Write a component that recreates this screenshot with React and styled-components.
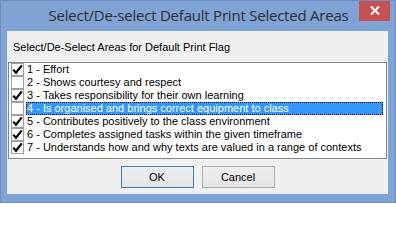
import React, { useState } from "react";
import styled, { createGlobalStyle } from "styled-components";

const GlobalStyle = createGlobalStyle`
  html, body {
    margin: 0;
    padding: 0;
    background: #fff;
  }
  * {
    box-sizing: border-box;
  }
`;

const Window = styled.div`
  width: 396px;
  height: 203px;
  overflow: hidden;
  background: #7ea3d4;
  border: 1px solid #6c8fbf;
  display: flex;
  flex-direction: column;
  padding: 0 7px 8px 6px;
  font-family: "Liberation Sans", Arial, sans-serif;
`;

const TitleBar = styled.div`
  height: 30px;
  flex-shrink: 0;
  display: flex;
  align-items: flex-start;
  position: relative;
`;

const Title = styled.div`
  flex: 1;
  text-align: center;
  font-family: "Open Sans", "Liberation Sans", sans-serif;
  font-size: 15px;
  color: #2e2e2e;
  padding: 4px 0 0 2px;
  letter-spacing: -0.22px;
`;

const CloseButton = styled.button`
  position: absolute;
  top: -1px;
  right: -2px;
  width: 31px;
  height: 21px;
  border: 0;
  background: #c75050;
  display: flex;
  align-items: center;
  justify-content: center;
  padding: 0;
`;

const Client = styled.div`
  flex: 1;
  background: #f0f0f0;
  display: flex;
  flex-direction: column;
  padding: 0 1px;
`;

const Caption = styled.div`
  font-size: 11px;
  color: #000;
  padding: 10px 0 0 5px;
  height: 31px;
  flex-shrink: 0;
`;

const ListBox = styled.div`
  height: 97px;
  flex-shrink: 0;
  background: #fff;
  border: 1px solid #828790;
  padding: 0 0 0 2px;
`;

const Row = styled.div`
  height: 13px;
  display: flex;
  align-items: center;
  font-size: 11px;
  color: #000;
  white-space: nowrap;
`;

const Box = styled.span`
  width: 13px;
  height: 13px;
  border: 1px solid #a0a0a0;
  background: #fff;
  display: flex;
  align-items: center;
  justify-content: center;
  flex-shrink: 0;
  margin-right: 2px;
`;

const Label = styled.span`
  height: 13px;
  line-height: 12px;
  padding: 0 1px;
  flex: ${(p) => (p.selected ? 1 : "none")};
  margin-right: ${(p) => (p.selected ? "3px" : 0)};
  background: ${(p) => (p.selected ? "#3399ff" : "transparent")};
  color: ${(p) => (p.selected ? "#fff" : "#000")};
  outline: ${(p) => (p.selected ? "1px dotted #000" : "none")};
  outline-offset: -1px;
`;

const Footer = styled.div`
  flex: 1;
  display: flex;
  justify-content: center;
  align-items: flex-start;
  gap: 8px;
  padding: 7px 0 0 0;
`;

const Button = styled.button`
  width: 73px;
  height: 22px;
  font-family: "Liberation Sans", Arial, sans-serif;
  font-size: 11px;
  color: #000;
  background: linear-gradient(#efefef, #e5e5e5);
  border: 1px solid ${(p) => (p.primary ? "#3c7fb1" : "#acacac")};
  padding: 0;
`;

const Check = () => (
  <svg width="11" height="11" viewBox="0 0 11 11">
    <path d="M1.2 5.6 L4 8.8 L9.8 1.4" stroke="#000" strokeWidth="2.2" fill="none" />
  </svg>
);

const items = [
  { text: "1 - Effort", checked: true },
  { text: "2 - Shows courtesy and respect", checked: false },
  { text: "3 - Takes responsibility for their own learning", checked: true },
  { text: "4 - Is organised and brings correct equipment to class", checked: false },
  { text: "5 - Contributes positively to the class environment", checked: true },
  { text: "6 - Completes assigned tasks within the given timeframe", checked: true },
  { text: "7 - Understands how and why texts are valued in a range of contexts", checked: true },
];

const App = () => {
  const [selected] = useState(3);

  return (
    <>
      <GlobalStyle />
      <Window>
        <TitleBar>
          <Title>Select/De-select Default Print Selected Areas</Title>
          <CloseButton>
            <svg width="10" height="9" viewBox="0 0 10 9">
              <path d="M1 0.5 L9 8.5 M9 0.5 L1 8.5" stroke="#fff" strokeWidth="2" />
            </svg>
          </CloseButton>
        </TitleBar>
        <Client>
          <Caption>Select/De-Select Areas for Default Print Flag</Caption>
          <ListBox>
            {items.map((item, i) => (
              <Row key={i}>
                <Box>{item.checked && <Check />}</Box>
                <Label selected={i === selected}>{item.text}</Label>
              </Row>
            ))}
          </ListBox>
          <Footer>
            <Button primary>OK</Button>
            <Button>Cancel</Button>
          </Footer>
        </Client>
      </Window>
    </>
  );
};

export default App;
